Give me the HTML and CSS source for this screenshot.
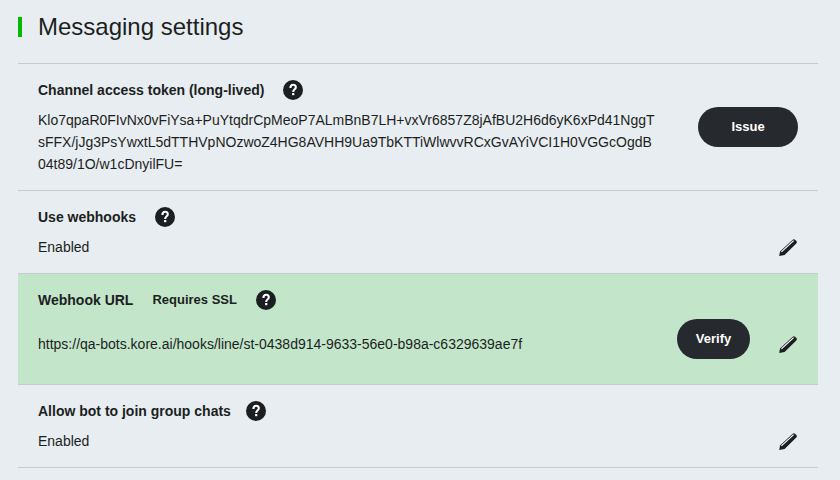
FILE: index.html
```html
<!DOCTYPE html>
<html lang="en">
<head>
<meta charset="utf-8">
<title>Messaging settings</title>
<link rel="stylesheet" href="styles.css">
</head>
<body>
<svg class="defs" aria-hidden="true">
  <symbol id="help" viewBox="0 0 20 20">
    <circle cx="10" cy="10" r="10" fill="#1c1f22"/>
    <path d="M7.400 8 Q7.400 4.800 10.200 4.800 Q12.800 4.800 12.800 7.300 Q12.800 8.500 11.400 9.500 Q10.200 10.400 10.200 12" fill="none" stroke="#fff" stroke-width="2.100"/>
    <path d="M9.100 13h2.200v2.200h-2.200z" fill="#fff"/>
  </symbol>
  <symbol id="pencil" viewBox="0 0 20 20">
    <path d="M1.200 18 L2 13.500 L14.400 2 Q15.800 .7 17.200 1.900 L18.500 3.100 Q19.500 4.300 18.300 5.500 L6.600 17 Z" fill="#1c1f22"/>
    <path d="M3 13.400 L15.200 2.200 L16 3 L3.800 14.200 Z" fill="#fff"/>
  </symbol>
</svg>
<main class="settings">
  <h1 class="title">Messaging settings</h1>
  <section class="row">
    <div class="info">
      <div class="head"><h2>Channel access token (long-lived)</h2><button class="help" aria-label="Help"><svg><use href="#help"/></svg></button></div>
      <p class="value token">Klo7qpaR0FIvNx0vFiYsa+PuYtqdrCpMeoP7ALmBnB7LH+vxVr6857Z8jAfBU2H6d6yK6xPd41NggTsFFX/jJg3PsYwxtL5dTTHVpNOzwoZ4HG8AVHH9Ua9TbKTTiWlwvvRCxGvAYiVCI1H0VGGcOgdB04t89/1O/w1cDnyilFU=</p>
    </div>
    <button class="pill issue">Issue</button>
  </section>
  <section class="row">
    <div class="info">
      <div class="head"><h2>Use webhooks</h2><button class="help" aria-label="Help"><svg><use href="#help"/></svg></button></div>
      <p class="value">Enabled</p>
    </div>
    <button class="edit" aria-label="Edit"><svg><use href="#pencil"/></svg></button>
  </section>
  <section class="row webhook">
    <div class="info">
      <div class="head"><h2>Webhook URL</h2><strong class="note">Requires SSL</strong><button class="help" aria-label="Help"><svg><use href="#help"/></svg></button></div>
      <p class="value url">https://qa-bots.kore.ai/hooks/line/st-0438d914-9633-56e0-b98a-c6329639ae7f</p>
    </div>
    <button class="pill verify">Verify</button>
    <button class="edit" aria-label="Edit"><svg><use href="#pencil"/></svg></button>
  </section>
  <section class="row">
    <div class="info">
      <div class="head group"><h2>Allow bot to join group chats</h2><button class="help" aria-label="Help"><svg><use href="#help"/></svg></button></div>
      <p class="value">Enabled</p>
    </div>
    <button class="edit" aria-label="Edit"><svg><use href="#pencil"/></svg></button>
  </section>
</main>
</body>
</html>
```
FILE: styles.css
```css
* { box-sizing: border-box; }
body {
  margin: 0;
  background: #e8edf1;
  color: #1c1f22;
  font: 14px/22px "Liberation Sans", Arial, sans-serif;
}
h1, h2, p { margin: 0; }
button { border: 0; padding: 0; background: none; font: inherit; cursor: pointer; }
.defs { position: absolute; width: 0; height: 0; }
.settings { padding: 17px 22px 12px 18px; }
.title {
  border-left: 4px solid #00b900;
  padding-left: 16px;
  margin-bottom: 26px;
  font-size: 24px;
  line-height: 20px;
  font-weight: 400;
}
.row {
  display: flex;
  align-items: flex-end;
  border-top: 1px solid #c6cbd1;
  padding: 15px 20px;
}
.row:last-child { border-bottom: 1px solid #c6cbd1; }
.info { flex: 1; min-width: 0; }
.head { display: flex; align-items: center; gap: 19px; height: 22px; margin-bottom: 8px; }
.group { gap: 15px; }
h2, .note { font-size: 14px; font-weight: 700; }
.note { font-size: 13px; }
.help, .help svg { display: block; width: 20px; height: 20px; }
.token { max-width: 620px; word-break: break-all; }
.webhook { background: #c3e6cb; }
.url { padding: 14px 0; }
.pill {
  height: 40px;
  border-radius: 20px;
  background: #26292d;
  color: #fff;
  font-size: 13px;
  font-weight: 700;
}
.issue { width: 100px; align-self: center; }
.verify { width: 73px; margin: 0 28px 10px 0; }
.edit, .edit svg { display: block; width: 20px; height: 20px; }
.webhook .edit { margin-bottom: 14px; }
```
